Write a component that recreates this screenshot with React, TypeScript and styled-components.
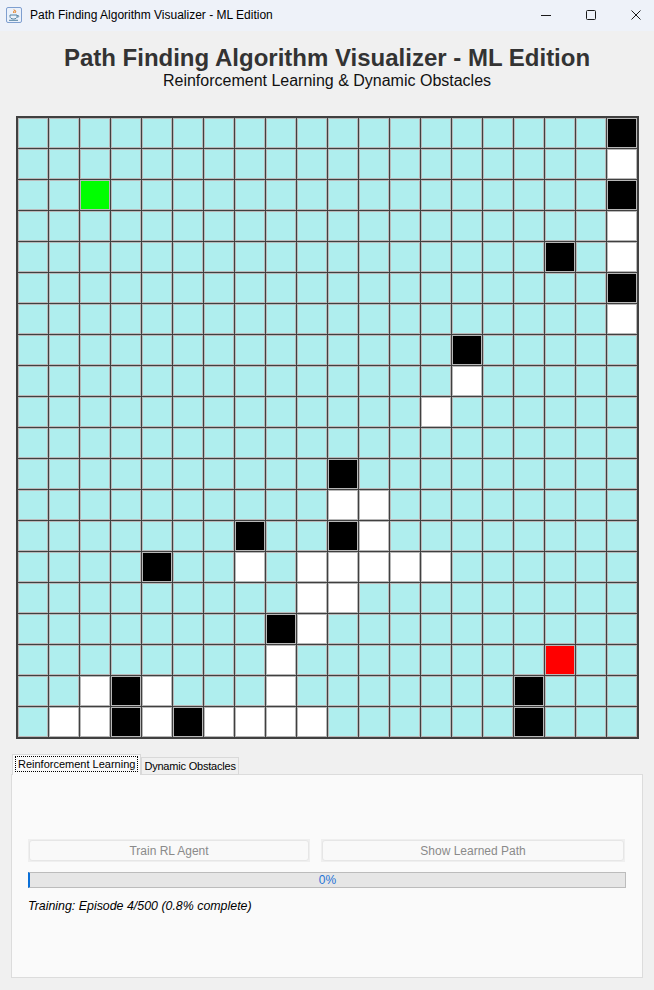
import styled, { createGlobalStyle } from "styled-components";

const GlobalStyle = createGlobalStyle`
  html, body {
    margin: 0;
    padding: 0;
    background: #f0f0f0;
    font-family: "Liberation Sans", Arial, sans-serif;
  }
`;

// '.' free, '#' wall, 'w' visited, 'S' start, 'E' goal
const gridRows = [
  "...................#",
  "...................w",
  "..S................#",
  "...................w",
  ".................#.w",
  "...................#",
  "...................w",
  "..............#.....",
  "..............w.....",
  ".............w......",
  "....................",
  "..........#.........",
  "..........ww........",
  ".......#..#w........",
  "....#..w.wwwww......",
  ".........ww.........",
  "........#w..........",
  "........w........E..",
  "..w#w...w.......#...",
  ".ww#w#wwww......#...",
];

const cellColors: Record<string, string> = {
  ".": "#afeeee",
  "#": "#000000",
  w: "#ffffff",
  S: "#00ff00",
  E: "#ff0000",
};

const Window = styled.div`
  width: 654px;
  height: 990px;
  display: flex;
  flex-direction: column;
  overflow: hidden;
`;

const TitleBar = styled.div`
  height: 29px;
  flex-shrink: 0;
  display: flex;
  align-items: center;
  padding: 0 0 2px 6px;
  background: #eef2f9;
`;

const WindowTitle = styled.span`
  margin-left: 8px;
  font-size: 12px;
  color: #000;
`;

const Controls = styled.div`
  margin-left: auto;
  display: flex;
  align-items: center;
  gap: 35px;
  padding-right: 13px;
`;

const Header = styled.header`
  padding-top: 14px;
  text-align: center;
`;

const Heading = styled.h1`
  margin: 0;
  font-size: 24px;
  line-height: 26px;
  font-weight: 700;
  color: #333333;
`;

const Subheading = styled.div`
  font-size: 16px;
  line-height: 19px;
  color: #111;
`;

const Board = styled.div`
  margin: 26px 0 0 16px;
  width: fit-content;
  display: grid;
  grid-template-columns: repeat(20, 30px);
  grid-auto-rows: 30px;
  gap: 1px;
  background: #404040;
  border: 2px solid #404040;
`;

const Cell = styled.div<{ $color: string }>`
  box-sizing: border-box;
  border: 1px solid #b8b8b8;
  background: ${(p) => p.$color};
`;

const TabArea = styled.div`
  margin: 15px 11px 0 11px;
`;

const TabStrip = styled.div`
  display: flex;
  align-items: flex-end;
  height: 20px;
  padding-left: 1px;
`;

const Tab = styled.div<{ $active?: boolean }>`
  box-sizing: border-box;
  height: ${(p) => (p.$active ? "21px" : "18px")};
  margin-bottom: -1px;
  padding: ${(p) => (p.$active ? "1px 2px 0" : "1px 2px 0")};
  border: 1px solid #d9d9d9;
  border-bottom: ${(p) => (p.$active ? "none" : "1px solid #d9d9d9")};
  background: ${(p) => (p.$active ? "#fafafa" : "#f0f0f0")};
  font-size: 11px;
  line-height: 14px;
  letter-spacing: ${(p) => (p.$active ? "0" : "-0.2px")};
  color: #000;
  position: relative;
  z-index: ${(p) => (p.$active ? 1 : 0)};
  white-space: nowrap;
`;

const FocusRing = styled.span`
  display: inline-block;
  padding: 0 2px;
  border: 1px dotted #000;
  line-height: 14px;
`;

const Panel = styled.div`
  box-sizing: border-box;
  height: 204px;
  border: 1px solid #dcdcdc;
  background: #fafafa;
  padding: 64px 16px 0 16px;
`;

const ButtonRow = styled.div`
  display: grid;
  grid-template-columns: 282px 304px;
  column-gap: 11px;
`;

const ActionButton = styled.button`
  box-sizing: border-box;
  height: 23px;
  margin: 0;
  padding: 0;
  border: 1px solid #efefef;
  background: #efefef;
  font-family: "Liberation Sans", Arial, sans-serif;
  font-size: 12px;
  color: #8a8a8a;
  cursor: default;
  display: flex;
  align-items: stretch;
`;

const ButtonFace = styled.span`
  flex: 1;
  display: flex;
  align-items: center;
  justify-content: center;
  border: 1px solid #e6e6e6;
  border-radius: 3px;
  background: #f9f9f9;
`;

const Progress = styled.div`
  box-sizing: border-box;
  margin-top: 10px;
  width: 598px;
  height: 16px;
  border: 1px solid #bcbcbc;
  border-left: 2px solid #0a6fd8;
  background: #e6e6e6;
  display: flex;
  align-items: center;
  justify-content: center;
  font-size: 12px;
  color: #1f72d6;
`;

const Status = styled.div`
  margin-top: 11px;
  font-size: 12.4px;
  line-height: 14px;
  font-style: italic;
  color: #000;
`;

const JavaIcon = () => (
  <svg width="16" height="16" viewBox="0 0 16 16">
    <rect x="0.5" y="0.5" width="15" height="15" rx="1.5" fill="#eaf1fb" stroke="#7f9fcf" />
    <path d="M8 2.5c1.5 1.2-1.5 2 0 3.5M9.5 3.5c1 1-1 1.5 0 2.5" stroke="#e76f00" strokeWidth="1" fill="none" />
    <path d="M4 8h7v1.5c0 1.5-1.5 2.5-3.5 2.5S4 11 4 9.5z" fill="none" stroke="#5382a1" strokeWidth="1" />
    <path d="M11 8.5h1.2c0.8 0 0.8 1.5 0 1.5H11" fill="none" stroke="#5382a1" strokeWidth="0.9" />
    <path d="M3 13.3h9" stroke="#5382a1" strokeWidth="1" />
  </svg>
);

const MinimizeIcon = () => (
  <svg width="10" height="10" viewBox="0 0 10 10">
    <path d="M0 5.5h10" stroke="#1a1a1a" strokeWidth="1" />
  </svg>
);

const MaximizeIcon = () => (
  <svg width="10" height="10" viewBox="0 0 10 10">
    <rect x="0.5" y="0.5" width="9" height="9" rx="1" fill="none" stroke="#1a1a1a" strokeWidth="1" />
  </svg>
);

const CloseIcon = () => (
  <svg width="10" height="10" viewBox="0 0 10 10">
    <path d="M0.5 0.5l9 9M9.5 0.5l-9 9" stroke="#1a1a1a" strokeWidth="1" />
  </svg>
);

export default function App() {
  return (
    <>
      <GlobalStyle />
      <Window>
        <TitleBar>
          <JavaIcon />
          <WindowTitle>Path Finding Algorithm Visualizer - ML Edition</WindowTitle>
          <Controls>
            <MinimizeIcon />
            <MaximizeIcon />
            <CloseIcon />
          </Controls>
        </TitleBar>

        <Header>
          <Heading>Path Finding Algorithm Visualizer - ML Edition</Heading>
          <Subheading>Reinforcement Learning &amp; Dynamic Obstacles</Subheading>
        </Header>

        <Board>
          {gridRows.map((row, r) =>
            row.split("").map((ch, c) => (
              <Cell key={`${r}-${c}`} $color={cellColors[ch]} />
            ))
          )}
        </Board>

        <TabArea>
          <TabStrip>
            <Tab $active>
              <FocusRing>Reinforcement Learning</FocusRing>
            </Tab>
            <Tab>Dynamic Obstacles</Tab>
          </TabStrip>
          <Panel>
            <ButtonRow>
              <ActionButton disabled>
                <ButtonFace>Train RL Agent</ButtonFace>
              </ActionButton>
              <ActionButton disabled>
                <ButtonFace>Show Learned Path</ButtonFace>
              </ActionButton>
            </ButtonRow>
            <Progress>0%</Progress>
            <Status>Training: Episode 4/500 (0.8% complete)</Status>
          </Panel>
        </TabArea>
      </Window>
    </>
  );
}
